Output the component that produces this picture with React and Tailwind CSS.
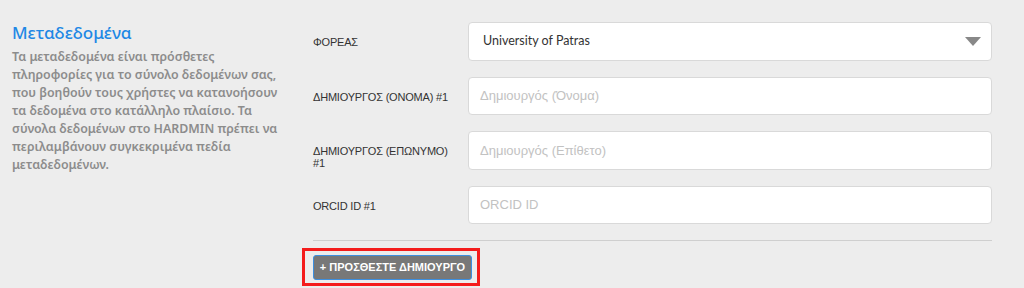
import React from "react";

const fields = [
  { label: "ΔΗΜΙΟΥΡΓΟΣ (ΟΝΟΜΑ) #1", placeholder: "Δημιουργός (Όνομα)" },
  { label: "ΔΗΜΙΟΥΡΓΟΣ (ΕΠΩΝΥΜΟ) #1", placeholder: "Δημιουργός (Επίθετο)" },
  { label: "ORCID ID #1", placeholder: "ORCID ID" },
];

const labelCls =
  "w-[155px] shrink-0 pt-[14px] pr-2 text-[11px] leading-[12px] tracking-[-0.2px] text-[#333] font-['Liberation_Sans',Arial,sans-serif]";

const App = () => {
  return (
    <div className="w-[1024px] h-[288px] overflow-hidden bg-[#ededed] flex">
      {/* left description */}
      <div className="w-[313px] shrink-0 pl-3 pt-[23px]">
        <h2 className="text-[17px] leading-[20px] text-[#1e88e5] font-['Noto_Sans',sans-serif] font-medium mb-[5px]">
          Μεταδεδομένα
        </h2>
        <p className="w-[272px] text-[12.4px] leading-[18px] text-[#8c8c8c] font-['Noto_Sans',sans-serif] font-semibold">
          Τα μεταδεδομένα είναι πρόσθετες πληροφορίες για το σύνολο δεδομένων σας,
          που βοηθούν τους χρήστες να κατανοήσουν τα δεδομένα στο κατάλληλο πλαίσιο.
          Τα σύνολα δεδομένων στο HARDMIN πρέπει να περιλαμβάνουν συγκεκριμένα πεδία
          μεταδεδομένων.
        </p>
      </div>

      {/* form */}
      <div className="flex-1 pr-8 pt-[22px]">
        <div className="flex flex-col gap-[16px]">
          <div className="flex">
            <div className={labelCls}>ΦΟΡΕΑΣ</div>
            <div className="flex-1 h-[38.5px] bg-white border border-[#d9d9d9] rounded-[4px] flex items-center justify-between pl-[14px] pr-[10px]">
              <span className="text-[12.5px] text-[#333] font-['Lato',sans-serif]">University of Patras</span>
              <svg width="16" height="9" viewBox="0 0 16 9">
                <path d="M0 0 L16 0 L8 9 Z" fill="#888" />
              </svg>
            </div>
          </div>
          {fields.map((f) => (
            <div key={f.label} className="flex">
              <div className={labelCls}>{f.label}</div>
              <div className="flex-1 h-[38.5px] bg-white border border-[#d9d9d9] rounded-[4px] flex items-center pl-[11px]">
                <span className="text-[13px] text-[#c2c2c2] font-['Liberation_Sans',Arial,sans-serif]">
                  {f.placeholder}
                </span>
              </div>
            </div>
          ))}
        </div>

        <div className="mt-[15.5px] h-px bg-[#cfcfcf]" />

        <div className="mt-[7px] -ml-[11px] inline-flex border-[3px] border-[#f41c1c] pl-[8px] pr-[5px] pt-[4px] pb-[3px]">
          <button className="w-[159px] h-[25px] bg-[#787878] border border-[#3d8fe0] rounded-[3px] text-white text-[11px] font-bold font-['Liberation_Sans',Arial,sans-serif] flex items-center justify-center">
            + ΠΡΟΣΘΕΣΤΕ ΔΗΜΙΟΥΡΓΟ
          </button>
        </div>
      </div>
    </div>
  );
};

export default App;
